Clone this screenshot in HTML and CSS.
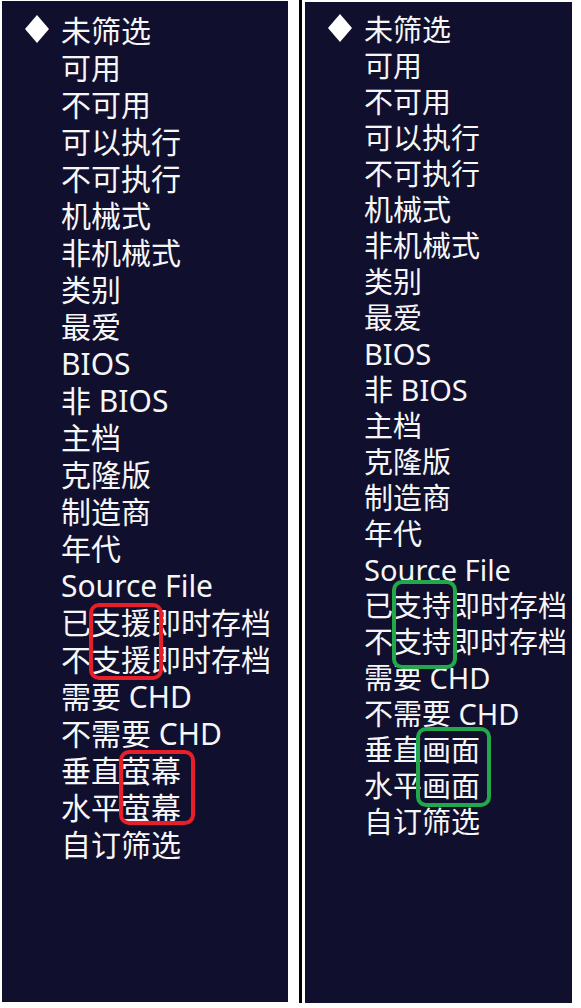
FILE: index.html
```html
<!DOCTYPE html>
<html lang="zh-CN">
<head>
<meta charset="utf-8">
<title>筛选</title>
<link rel="stylesheet" href="styles.css">
</head>
<body>
<div class="page">
  <section class="panel panel-left">
    <ul class="list">
      <li class="row"><span class="mark"><svg width="24" height="28" viewBox="0 0 24 28"><polygon points="12,0 24,14 12,28 0,14" fill="#fff"/></svg></span><span>未筛选</span></li>
      <li class="row"><span class="mark"></span><span>可用</span></li>
      <li class="row"><span class="mark"></span><span>不可用</span></li>
      <li class="row"><span class="mark"></span><span>可以执行</span></li>
      <li class="row"><span class="mark"></span><span>不可执行</span></li>
      <li class="row"><span class="mark"></span><span>机械式</span></li>
      <li class="row"><span class="mark"></span><span>非机械式</span></li>
      <li class="row"><span class="mark"></span><span>类别</span></li>
      <li class="row"><span class="mark"></span><span>最爱</span></li>
      <li class="row"><span class="mark"></span><span>BIOS</span></li>
      <li class="row"><span class="mark"></span><span>非 BIOS</span></li>
      <li class="row"><span class="mark"></span><span>主档</span></li>
      <li class="row"><span class="mark"></span><span>克隆版</span></li>
      <li class="row"><span class="mark"></span><span>制造商</span></li>
      <li class="row"><span class="mark"></span><span>年代</span></li>
      <li class="row"><span class="mark"></span><span>Source File</span></li>
      <li class="row"><span class="mark"></span><span>已支援即时存档</span></li>
      <li class="row"><span class="mark"></span><span>不支援即时存档</span></li>
      <li class="row"><span class="mark"></span><span>需要 CHD</span></li>
      <li class="row"><span class="mark"></span><span>不需要 CHD</span></li>
      <li class="row"><span class="mark"></span><span>垂直萤幕</span></li>
      <li class="row"><span class="mark"></span><span>水平萤幕</span></li>
      <li class="row"><span class="mark"></span><span>自订筛选</span></li>
    </ul>
    <div class="note note-red note-l1"></div>
    <div class="note note-red note-l2"></div>
  </section>
  <div class="divider"></div>
  <section class="panel panel-right">
    <ul class="list">
      <li class="row"><span class="mark"><svg width="24" height="28" viewBox="0 0 24 28"><polygon points="12,0 24,14 12,28 0,14" fill="#fff"/></svg></span><span>未筛选</span></li>
      <li class="row"><span class="mark"></span><span>可用</span></li>
      <li class="row"><span class="mark"></span><span>不可用</span></li>
      <li class="row"><span class="mark"></span><span>可以执行</span></li>
      <li class="row"><span class="mark"></span><span>不可执行</span></li>
      <li class="row"><span class="mark"></span><span>机械式</span></li>
      <li class="row"><span class="mark"></span><span>非机械式</span></li>
      <li class="row"><span class="mark"></span><span>类别</span></li>
      <li class="row"><span class="mark"></span><span>最爱</span></li>
      <li class="row"><span class="mark"></span><span>BIOS</span></li>
      <li class="row"><span class="mark"></span><span>非 BIOS</span></li>
      <li class="row"><span class="mark"></span><span>主档</span></li>
      <li class="row"><span class="mark"></span><span>克隆版</span></li>
      <li class="row"><span class="mark"></span><span>制造商</span></li>
      <li class="row"><span class="mark"></span><span>年代</span></li>
      <li class="row"><span class="mark"></span><span>Source File</span></li>
      <li class="row"><span class="mark"></span><span>已支持即时存档</span></li>
      <li class="row"><span class="mark"></span><span>不支持即时存档</span></li>
      <li class="row"><span class="mark"></span><span>需要 CHD</span></li>
      <li class="row"><span class="mark"></span><span>不需要 CHD</span></li>
      <li class="row"><span class="mark"></span><span>垂直画面</span></li>
      <li class="row"><span class="mark"></span><span>水平画面</span></li>
      <li class="row"><span class="mark"></span><span>自订筛选</span></li>
    </ul>
    <div class="note note-green note-r1"></div>
    <div class="note note-green note-r2"></div>
  </section>
</div>
</body>
</html>
```

FILE: styles.css
```css
html, body {
  margin: 0;
  padding: 0;
  background: #ffffff;
}

.page {
  display: flex;
  align-items: flex-start;
  width: 581px;
  height: 1008px;
  overflow: hidden;
}

.panel {
  position: relative;
  flex: none;
  background: #100f2e;
  color: #f6f6f6;
  font-family: "Noto Sans", "Noto Sans CJK SC", sans-serif;
  overflow: hidden;
  height: 1001px;
}

.panel-left {
  width: 286px;
  margin: 1px 0 0 2px;
  font-size: 30px;
  line-height: 37px;
}

.panel-right {
  width: 267px;
  margin: 2px 0 0 3px;
  font-size: 29px;
  line-height: 36px;
}

.divider {
  flex: none;
  width: 3px;
  height: 1003px;
  margin-left: 11px;
  background: #000000;
}

.list {
  list-style: none;
  margin: 0;
  padding: 11px 0 0 0;
}

.panel-right .list {
  padding-top: 10px;
}

.row {
  display: flex;
  align-items: center;
  white-space: nowrap;
}

.mark {
  flex: none;
  width: 59px;
  height: 37px;
  display: flex;
  align-items: center;
  padding-left: 23px;
  box-sizing: border-box;
}

.panel-right .mark {
  height: 36px;
}

.mark svg {
  display: block;
  margin-top: -4px;
}

.note {
  position: absolute;
  box-sizing: border-box;
  border: 4px solid;
  border-radius: 10px;
}

.note-red {
  border-color: #e61f2b;
}

.note-green {
  border-color: #22a84b;
}

.note-l1 {
  left: 87px;
  top: 602px;
  width: 74px;
  height: 77px;
}

.note-l2 {
  left: 117px;
  top: 749px;
  width: 76px;
  height: 75px;
}

.note-r1 {
  left: 87px;
  top: 578px;
  width: 65px;
  height: 89px;
}

.note-r2 {
  left: 111px;
  top: 725px;
  width: 75px;
  height: 80px;
}
```
